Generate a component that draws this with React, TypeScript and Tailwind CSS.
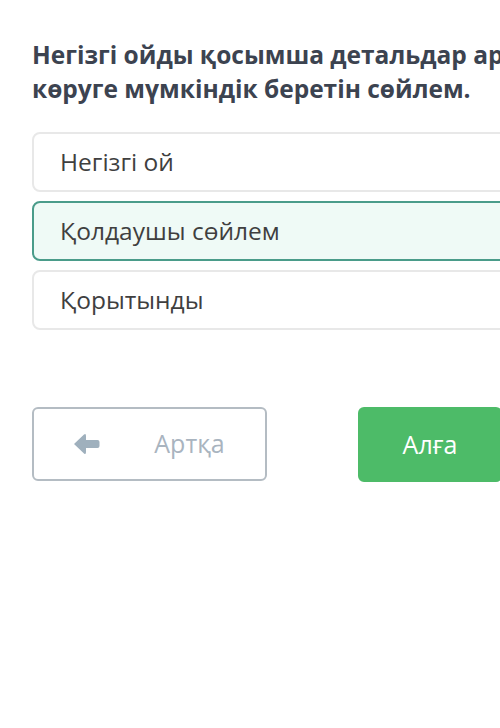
import React from "react";

const options = [
  { label: "Негізгі ой", selected: false },
  { label: "Қолдаушы сөйлем", selected: true },
  { label: "Қорытынды", selected: false },
];

function ArrowLeft() {
  return (
    <svg width="27" height="22" viewBox="0 0 27 22">
      <path
        d="M1 11 L11 1.5 Q13 0 13 3 L13 7 L24.5 7 Q26.5 7 26.5 9 L26.5 13 Q26.5 15 24.5 15 L13 15 L13 19 Q13 22 11 20.5 Z"
        fill="#9fb0bd"
      />
    </svg>
  );
}

export default function App() {
  return (
    <div
      className="w-[500px] h-[728px] overflow-hidden bg-white"
      style={{ fontFamily: '"Open Sans", "Noto Sans", sans-serif' }}
    >
      <div className="w-[600px] pl-8 pt-[38px]">
        <h1 className="text-[24.5px] leading-[34px] font-bold text-[#3c4350] whitespace-nowrap">
          Негізгі ойды қосымша детальдар арқылы
          <br />
          көруге мүмкіндік беретін сөйлем.
        </h1>

        <div className="mt-[26px] flex flex-col gap-[9px]">
          {options.map((o) => (
            <div
              key={o.label}
              className={
                o.selected
                  ? "h-[60px] rounded-lg border-2 border-[#4a9c8a] bg-[#effaf6] pl-[26px] flex items-center text-[24.5px] text-[#3f3f3f]"
                  : "h-[60px] rounded-lg border-2 border-[#e8e8e8] bg-white pl-[26px] flex items-center text-[24.5px] text-[#3f3f3f]"
              }
            >
              {o.label}
            </div>
          ))}
        </div>

        <div className="mt-[77px] flex gap-[91px]">
          <button className="w-[235px] h-[74px] rounded-md border-2 border-[#b4bcc3] flex items-center pl-[39px]">
            <ArrowLeft />
            <span className="flex-1 text-center text-[25px] text-[#a9b4bf] pl-[14px]">Артқа</span>
          </button>
          <button className="w-[144px] h-[75px] rounded-md bg-[#4dbb68] text-white text-[25px]">
            Алға
          </button>
        </div>
      </div>
    </div>
  );
}
